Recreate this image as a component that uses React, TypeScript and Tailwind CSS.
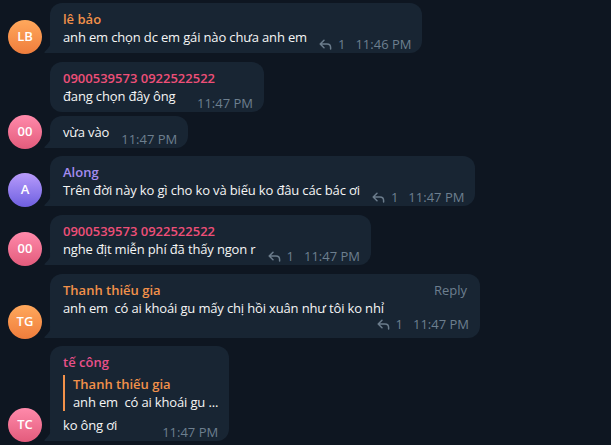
import React from 'react';

type Msg = {
  name?: string;
  nameColor?: string;
  text: string;
  time: string;
  replies?: number;
  avatar?: { initials: string; from: string; to: string };
  quote?: { name: string; text: string };
  showReply?: boolean;
  stacked?: boolean;
  width?: string;
  gapTop: string;
};

const messages: Msg[] = [
  {
    name: 'lê bảo',
    nameColor: 'text-[#f2914a]',
    text: 'anh em chọn dc em gái nào chưa anh em',
    time: '11:46 PM',
    replies: 1,
    avatar: { initials: 'LB', from: 'from-[#ffa85c]', to: 'to-[#ef7d3c]' },
    gapTop: 'mt-[3px]',
  },
  {
    name: '0900539573 0922522522',
    nameColor: 'text-[#ee4f78]',
    text: 'đang chọn đây ông',
    time: '11:47 PM',
    width: 'w-[214px]',
    gapTop: 'mt-[9px]',
  },
  {
    text: 'vừa vào',
    time: '11:47 PM',
    avatar: { initials: '00', from: 'from-[#ff8aab]', to: 'to-[#e35b7c]' },
    gapTop: 'mt-[4px]',
  },
  {
    name: 'Along',
    nameColor: 'text-[#a48cf0]',
    text: 'Trên đời này ko gì cho ko và biếu ko đâu các bác ơi',
    time: '11:47 PM',
    replies: 1,
    avatar: { initials: 'A', from: 'from-[#b99bfb]', to: 'to-[#6f5fe0]' },
    gapTop: 'mt-[8px]',
  },
  {
    name: '0900539573 0922522522',
    nameColor: 'text-[#ee4f78]',
    text: 'nghe địt miễn phí đã thấy ngon r',
    time: '11:47 PM',
    replies: 1,
    avatar: { initials: '00', from: 'from-[#ff8aab]', to: 'to-[#e35b7c]' },
    gapTop: 'mt-[9px]',
  },
  {
    name: 'Thanh thiếu gia',
    nameColor: 'text-[#f2914a]',
    text: 'anh em  có ai khoái gu mấy chị hồi xuân như tôi ko nhỉ',
    time: '11:47 PM',
    replies: 1,
    showReply: true,
    stacked: true,
    width: 'w-[430px]',
    avatar: { initials: 'TG', from: 'from-[#ffa85c]', to: 'to-[#ef7d3c]' },
    gapTop: 'mt-[9px]',
  },
  {
    name: 'tế công',
    nameColor: 'text-[#e8508a]',
    text: 'ko ông ơi',
    time: '11:47 PM',
    quote: { name: 'Thanh thiếu gia', text: 'anh em  có ai khoái gu ...' },
    avatar: { initials: 'TC', from: 'from-[#ff8aab]', to: 'to-[#e35b7c]' },
    gapTop: 'mt-[8px]',
  },
];

function ReplyIcon() {
  return (
    <svg width="13" height="11" viewBox="0 0 13 11" fill="none" className="mr-[6px]">
      <path
        d="M5 1.2 1.2 5 5 8.8M1.5 5H8c2.1 0 3.6 1.5 3.6 3.6V10"
        stroke="#6b7c8c"
        strokeWidth="1.5"
        strokeLinecap="round"
        strokeLinejoin="round"
      />
    </svg>
  );
}

function Meta({ m }: { m: Msg }) {
  return (
    <span className="flex items-center text-[13px] leading-none text-[#6d7f8f] whitespace-nowrap">
      {m.replies ? (
        <>
          <ReplyIcon />
          <span className="mr-[10px]">{m.replies}</span>
        </>
      ) : null}
      <span>{m.time}</span>
    </span>
  );
}

function Bubble({ m }: { m: Msg }) {
  return (
    <div className={`relative flex pl-[50px] ${m.gapTop}`}>
      {m.avatar ? (
        <div
          className={`absolute left-[8px] bottom-[-1px] w-[34px] h-[34px] rounded-full bg-gradient-to-b ${m.avatar.from} ${m.avatar.to} flex items-center justify-center text-white text-[13px] font-semibold`}
        >
          {m.avatar.initials}
        </div>
      ) : null}
      <div
        className={`relative bg-[#182533] rounded-[12px] ${m.avatar ? 'rounded-bl-none' : ''} ${m.width ?? ''} pl-[13px] pr-[11px] pt-[7px] pb-[7px]`}
      >
        {m.avatar ? (
          <svg
            width="7"
            height="12"
            viewBox="0 0 7 12"
            className="absolute left-[-6px] bottom-0"
          >
            <path d="M7 0v12H1.5C0.3 12 0 11.2 0.9 10.4 4.5 7.3 7 4 7 0Z" fill="#182533" />
          </svg>
        ) : null}
        {m.name ? (
          <div className="flex items-center justify-between gap-6">
            <span className={`${m.nameColor} text-[13px] font-semibold leading-[18px]`}>{m.name}</span>
            {m.showReply ? (
              <span className="text-[13px] text-[#6d7f8f] leading-[18px] mr-[2px]">Reply</span>
            ) : null}
          </div>
        ) : null}
        {m.quote ? (
          <div className="mt-[4px] mb-[5px] border-l-2 border-[#f2914a] pl-[8px]">
            <div className="text-[13px] font-semibold text-[#f2914a] leading-[18px]">{m.quote.name}</div>
            <div className="text-[13px] text-[#f5f5f5] leading-[18px] whitespace-pre tracking-[-0.15px]">
              {m.quote.text}
            </div>
          </div>
        ) : null}
        {m.stacked ? (
          <>
            <div className="text-[13px] text-[#f5f5f5] leading-[18px] whitespace-pre tracking-[-0.15px]">{m.text}</div>
            <div className="flex justify-end mt-[1px]">
              <Meta m={m} />
            </div>
          </>
        ) : (
          <div className="flex items-end justify-between">
            <span className="text-[13px] text-[#f5f5f5] leading-[18px] whitespace-pre tracking-[-0.15px]">{m.text}</span>
            <span className="ml-[12px] translate-y-[5px]">
              <Meta m={m} />
            </span>
          </div>
        )}
      </div>
    </div>
  );
}

export default function App() {
  return (
    <div
      className="w-[611px] h-[445px] overflow-hidden bg-[#0e1621]"
      style={{ fontFamily: '"Open Sans", "Noto Sans", sans-serif' }}
    >
      {messages.map((m, i) => (
        <Bubble key={i} m={m} />
      ))}
    </div>
  );
}
